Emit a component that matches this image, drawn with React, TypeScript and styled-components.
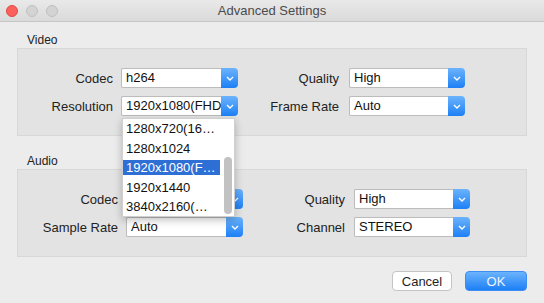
import styled, { createGlobalStyle } from "styled-components";

const GlobalStyle = createGlobalStyle`
  html, body {
    margin: 0;
    padding: 0;
  }
  body {
    background: #ececec;
    font-family: "Liberation Sans", Arial, sans-serif;
    font-size: 13px;
    color: #1f1f1f;
  }
`;

const Window = styled.div`
  width: 544px;
  height: 303px;
  overflow: hidden;
  background: #ececec;
  display: flex;
  flex-direction: column;
`;

const TitleBar = styled.div`
  height: 21px;
  display: grid;
  grid-template-columns: 1fr auto 1fr;
  align-items: center;
  background: linear-gradient(#e9e9e9, #dadada);
  border-bottom: 1px solid #c6c6c6;
`;

const Lights = styled.div`
  display: flex;
  gap: 8px;
  padding-left: 6px;
`;

const Light = styled.span<{ $color: string; $edge: string }>`
  width: 12px;
  height: 12px;
  border-radius: 50%;
  box-sizing: border-box;
  background: ${(p) => p.$color};
  border: 1px solid ${(p) => p.$edge};
`;

const Title = styled.div`
  font-size: 13px;
  color: #4b4b4b;
`;

const Content = styled.div`
  padding: 12px 17px 0;
`;

const Section = styled.section<{ $gap?: number }>`
  margin-top: ${(p) => p.$gap ?? 0}px;
`;

const SectionTitle = styled.div`
  font-size: 12px;
  line-height: 13px;
  margin: 0 0 1px 10px;
  color: #222;
`;

const GroupBox = styled.div<{ $first: number }>`
  display: grid;
  grid-template-columns: ${(p) => p.$first}px 117px 111px 116px;
  row-gap: 8px;
  align-items: center;
  padding: 19px 0 19px;
  background: #e3e3e3;
  border: 1px solid #d8d8d8;
`;

const Label = styled.label<{ $pad: number }>`
  text-align: right;
  padding-right: ${(p) => p.$pad}px;
  color: #222;
  white-space: nowrap;
`;

const SelectBox = styled.div`
  position: relative;
  display: flex;
  height: 20px;
`;

const SelectValue = styled.div`
  flex: 1;
  min-width: 0;
  box-sizing: border-box;
  background: #fff;
  border: 1px solid #bcbcbc;
  border-right: none;
  border-radius: 2px 0 0 2px;
  padding-left: 4px;
  line-height: 18px;
  white-space: nowrap;
  overflow: hidden;
  color: #111;
`;

const SelectArrow = styled.div`
  width: 17px;
  display: flex;
  align-items: center;
  justify-content: center;
  border-radius: 0 4px 4px 0;
  background: linear-gradient(#6cb3fc, #1d80f6);
`;

const Popup = styled.div`
  position: absolute;
  top: 22px;
  left: 1px;
  width: 113px;
  height: 99px;
  box-sizing: border-box;
  background: #fff;
  border: 1px solid #cfcfcf;
  box-shadow: 0 3px 8px rgba(0, 0, 0, 0.25);
  z-index: 10;
  overflow: hidden;
`;

const Option = styled.div<{ $active?: boolean }>`
  height: 19.5px;
  line-height: 19.5px;
  padding-left: 3px;
  margin-right: 14px;
  white-space: nowrap;
  color: ${(p) => (p.$active ? "#fff" : "#111")};
  background: ${(p) =>
    p.$active
      ? "linear-gradient(transparent 2px, #2e6fd6 2px, #2e6fd6 17px, transparent 17px)"
      : "transparent"};
`;

const ScrollThumb = styled.div`
  position: absolute;
  right: 2px;
  top: 38px;
  width: 8px;
  height: 57px;
  border-radius: 4px;
  background: #c2c2c2;
`;

const Footer = styled.div`
  display: flex;
  justify-content: flex-end;
  gap: 13px;
  margin-top: 14px;
`;

const Button = styled.button<{ $primary?: boolean; $w: number }>`
  width: ${(p) => p.$w}px;
  height: 20px;
  padding: 0;
  font-family: inherit;
  font-size: 13px;
  border-radius: 4px;
  box-sizing: border-box;
  color: ${(p) => (p.$primary ? "#eef5ff" : "#1f1f1f")};
  background: ${(p) =>
    p.$primary ? "linear-gradient(#6cb3fc, #1d80f6)" : "#fff"};
  border: 1px solid ${(p) => (p.$primary ? "#3c8ef5" : "#c4c4c4")};
`;

function Chevron() {
  return (
    <svg width="8" height="5" viewBox="0 0 8 5">
      <path d="M1 1 L4 4 L7 1" fill="none" stroke="#fff" strokeWidth="1.4" />
    </svg>
  );
}

function Select({ value, children }: { value: string; children?: React.ReactNode }) {
  return (
    <SelectBox>
      <SelectValue>{value}</SelectValue>
      <SelectArrow>
        <Chevron />
      </SelectArrow>
      {children}
    </SelectBox>
  );
}

const resolutions = [
  "1280x720(16…",
  "1280x1024",
  "1920x1080(F…",
  "1920x1440",
  "3840x2160(…",
];

export default function App() {
  return (
    <>
      <GlobalStyle />
      <Window>
        <TitleBar>
          <Lights>
            <Light $color="#fc605c" $edge="#de4b46" />
            <Light $color="#d3d3d3" $edge="#c0c0c0" />
            <Light $color="#d3d3d3" $edge="#c0c0c0" />
          </Lights>
          <Title>Advanced Settings</Title>
          <span />
        </TitleBar>
        <Content>
          <Section>
            <SectionTitle>Video</SectionTitle>
            <GroupBox $first={103}>
              <Label $pad={8}>Codec</Label>
              <Select value="h264" />
              <Label $pad={10}>Quality</Label>
              <Select value="High" />
              <Label $pad={8}>Resolution</Label>
              <Select value="1920x1080(FHD)">
                <Popup>
                  {resolutions.map((r, i) => (
                    <Option key={r} $active={i === 2}>
                      {r}
                    </Option>
                  ))}
                  <ScrollThumb />
                </Popup>
              </Select>
              <Label $pad={10}>Frame Rate</Label>
              <Select value="Auto" />
            </GroupBox>
          </Section>
          <Section $gap={19}>
            <SectionTitle>Audio</SectionTitle>
            <GroupBox $first={108}>
              <Label $pad={8}>Codec</Label>
              <Select value="" />
              <Label $pad={9}>Quality</Label>
              <Select value="High" />
              <Label $pad={8}>Sample Rate</Label>
              <Select value="Auto" />
              <Label $pad={9}>Channel</Label>
              <Select value="STEREO" />
            </GroupBox>
          </Section>
          <Footer>
            <Button $w={60}>Cancel</Button>
            <Button $w={62} $primary>
              OK
            </Button>
          </Footer>
        </Content>
      </Window>
    </>
  );
}
